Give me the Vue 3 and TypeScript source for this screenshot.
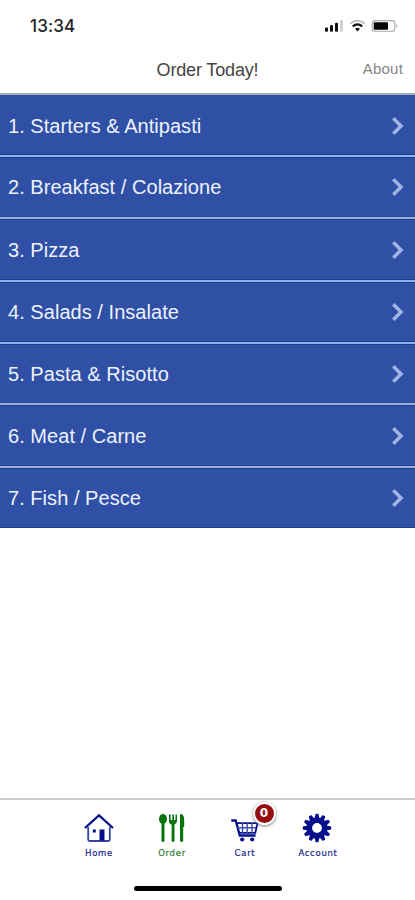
<script setup lang="ts">
interface MenuItem {
  label: string
  line: string
}

const items: MenuItem[] = [
  { label: '1. Starters & Antipasti', line: 'first' },
  { label: '2. Breakfast / Colazione', line: 'sky' },
  { label: '3. Pizza', line: 'mist' },
  { label: '4. Salads / Insalate', line: 'sky' },
  { label: '5. Pasta & Risotto', line: 'sky' },
  { label: '6. Meat / Carne', line: 'mist' },
  { label: '7. Fish / Pesce', line: 'mist' },
]

const teeth: number[] = Array.from({ length: 12 }, (_, i) => i * 30)
</script>

<template>
  <div class="screen">
    <div class="status">
      <span class="time">13:34</span>
      <svg class="indicators" width="76" height="16" viewBox="0 0 76 16">
        <g fill="#111">
          <rect x="1" y="9.5" width="3" height="4.2" rx="1" />
          <rect x="6" y="7" width="3" height="6.7" rx="1" />
          <rect x="11" y="4.8" width="3" height="8.9" rx="1" />
        </g>
        <rect x="16.2" y="2" width="2.6" height="11.7" rx="1" fill="#ccc" />
        <path d="M26.3 5.6Q33.5 -.4 40.7 5.6" fill="none" stroke="#bbb" stroke-width="1.8" />
        <path d="M28.8 8.3Q33.5 4.3 38.2 8.3" fill="none" stroke="#111" stroke-width="2.2" />
        <path d="M31 10.7Q33.5 8.8 36 10.7L33.5 13.4Z" fill="#111" />
        <rect x="48.2" y="2.6" width="22.6" height="10.6" rx="2.8" fill="#fff" stroke="#aaa" stroke-width="1.1" />
        <rect x="49.7" y="4.2" width="14.3" height="7.5" rx="1" fill="#050505" />
        <path d="M72.3 5.8Q74.4 7.9 72.3 10Z" fill="#aaa" />
      </svg>
    </div>
    <header class="header">
      <h1 class="title">Order Today!</h1>
      <a class="about">About</a>
    </header>
    <main class="list">
      <div v-for="item in items" :key="item.label" class="row" :class="item.line">
        <span class="label">{{ item.label }}</span>
        <svg class="chevron" width="14" height="20" viewBox="0 0 14 20">
          <path d="M2.3 2.2L10 10L2.3 17.8" fill="none" stroke="#9eb5e6" stroke-width="3.5" />
        </svg>
      </div>
    </main>
    <nav class="tabs">
      <div class="tab">
        <svg width="34" height="34" viewBox="0 0 34 34" fill="none" stroke="#07108b">
          <path d="M6.2 17V29.6Q6.2 31 7.6 31H26.4Q27.8 31 27.8 29.6V17" stroke="#34439f" stroke-width="1.8" />
          <path d="M3 18L17 5.4L31 18" stroke-width="2.3" />
          <rect x="17.5" y="19.5" width="5" height="11" fill="#07108b" stroke="none" />
          <rect x="10.8" y="19.5" width="3" height="3" fill="#07108b" stroke="none" />
        </svg>
        <span class="tab-name">Home</span>
      </div>
      <div class="tab active">
        <svg width="34" height="34" viewBox="0 0 34 34" fill="#08750c">
          <ellipse cx="8" cy="9" rx="4" ry="5" />
          <rect x="6.5" y="12" width="3" height="20" rx="1.5" />
          <path d="M14 4.5V11Q14 14 16.6 14.6V31Q18 32.8 19.5 31V14.6Q22 14 22 11V4.5H20.5V10H19V4.5H17.3V10H15.6V4.5Z" />
          <path d="M25 4.8Q25 3.8 26.5 4Q29.2 5.2 29.2 10V17H28.2V31Q26.6 32.8 25 31Z" />
        </svg>
        <span class="tab-name">Order</span>
      </div>
      <div class="tab">
        <svg width="34" height="34" viewBox="1 0 34 34" fill="none" stroke="#07108b">
          <path d="M4.3 10.5H8.7L12.8 25.5H28.6" stroke-width="2.3" />
          <path d="M9.2 13.2H30.5L28.3 22.8H12" stroke-width="1.8" />
          <path d="M10.5 17.8H29M15.5 13V23M20.2 13V23M25 13V23" stroke-width="1.4" stroke="#3d4bb0" />
          <circle cx="15.2" cy="29.5" r="2.1" fill="#07108b" stroke="none" />
          <circle cx="25.2" cy="29.5" r="2.1" fill="#07108b" stroke="none" />
        </svg>
        <span class="badge">0</span>
        <span class="tab-name">Cart</span>
      </div>
      <div class="tab">
        <svg width="34" height="34" viewBox="1 0 34 34">
          <g fill="#07108b">
            <path v-for="angle in teeth" :key="angle" d="M14.5 8.5L15.6 3.8H18.4L19.5 8.5Z" :transform="`rotate(${angle} 17 18)`" />
          </g>
          <circle cx="17" cy="18" r="7.7" fill="none" stroke="#07108b" stroke-width="5.6" />
        </svg>
        <span class="tab-name">Account</span>
      </div>
    </nav>
    <div class="home-bar"></div>
  </div>
</template>

<style>
body {
  background: #fff;
}
</style>

<style scoped>
.screen {
  width: 415px;
  height: 900px;
  display: flex;
  flex-direction: column;
  overflow: hidden;
  background: #fff;
  font-family: "Liberation Sans", Arial, sans-serif;
}
.status {
  height: 50px;
  flex: none;
  display: flex;
  justify-content: space-between;
  padding: 0 15px 0 30px;
}
.time {
  padding-top: 16px;
  font: 500 17px/20px Inter, sans-serif;
  letter-spacing: .1px;
  color: #222;
}
.indicators {
  margin-top: 18px;
}
.header {
  height: 43px;
  flex: none;
  display: grid;
  grid-template-columns: 1fr auto 1fr;
  align-items: start;
  padding: 0 12px;
  border-bottom: 2px solid #a5adbf;
}
.title {
  grid-column: 2;
  margin: 9px 0 0;
  font-size: 18px;
  line-height: 22px;
  font-weight: 400;
  letter-spacing: -.15px;
  color: #444;
}
.about {
  justify-self: end;
  padding-top: 9px;
  font-size: 15px;
  line-height: 20px;
  letter-spacing: .2px;
  color: #858585;
}
.list {
  height: 433px;
  flex: none;
  display: grid;
  grid-template-rows: 60px 62px 63px 62px 61px 63px 61px;
  background: #3050a5;
  border-bottom: 1px solid #173e95;
  box-sizing: border-box;
}
.row {
  display: flex;
  align-items: center;
  justify-content: space-between;
  padding: 0 10px 0 8px;
  box-sizing: border-box;
  border-top: 2px solid #3050a5;
}
.first {
  border-top: 0;
  padding-top: 1px;
}
.sky {
  border-color: #8fb4f0;
  box-shadow: 0 -1px #173e95, inset 0 1px #173e95;
}
.mist {
  border-color: #a2abd2;
  box-shadow: 0 -1px #2446a0, inset 0 1px #173e95;
}
.label {
  font-size: 20px;
  line-height: 24px;
  letter-spacing: .04px;
  white-space: nowrap;
  color: #edf2ff;
}
.tabs {
  height: 71px;
  flex: none;
  margin-top: 270px;
  padding-left: 2px;
  box-sizing: content-box;
  display: grid;
  grid-template-columns: repeat(4, 73px);
  justify-content: center;
  border-top: 2px solid #ccc;
}
.tab {
  position: relative;
  display: flex;
  flex-direction: column;
  align-items: center;
  padding-top: 10px;
  color: #20258b;
}
.active {
  color: #277b2c;
}
.tab-name {
  margin-top: 4px;
  font: 8.5px/11px "DejaVu Sans", sans-serif;
  letter-spacing: .7px;
  -webkit-text-stroke: .2px currentColor;
}
.badge {
  position: absolute;
  left: 44px;
  top: 2px;
  width: 19px;
  height: 19px;
  border: 2px solid #fff;
  border-radius: 50%;
  background: #940b0d;
  box-shadow: 0 1px 3px #777;
  color: #fff;
  text-align: center;
  font: bold 12px/19px "DejaVu Sans", sans-serif;
}
.home-bar {
  flex: none;
  width: 148px;
  height: 5px;
  margin: 15px 0 0 134px;
  border-radius: 3px;
  background: #000;
}
</style>
